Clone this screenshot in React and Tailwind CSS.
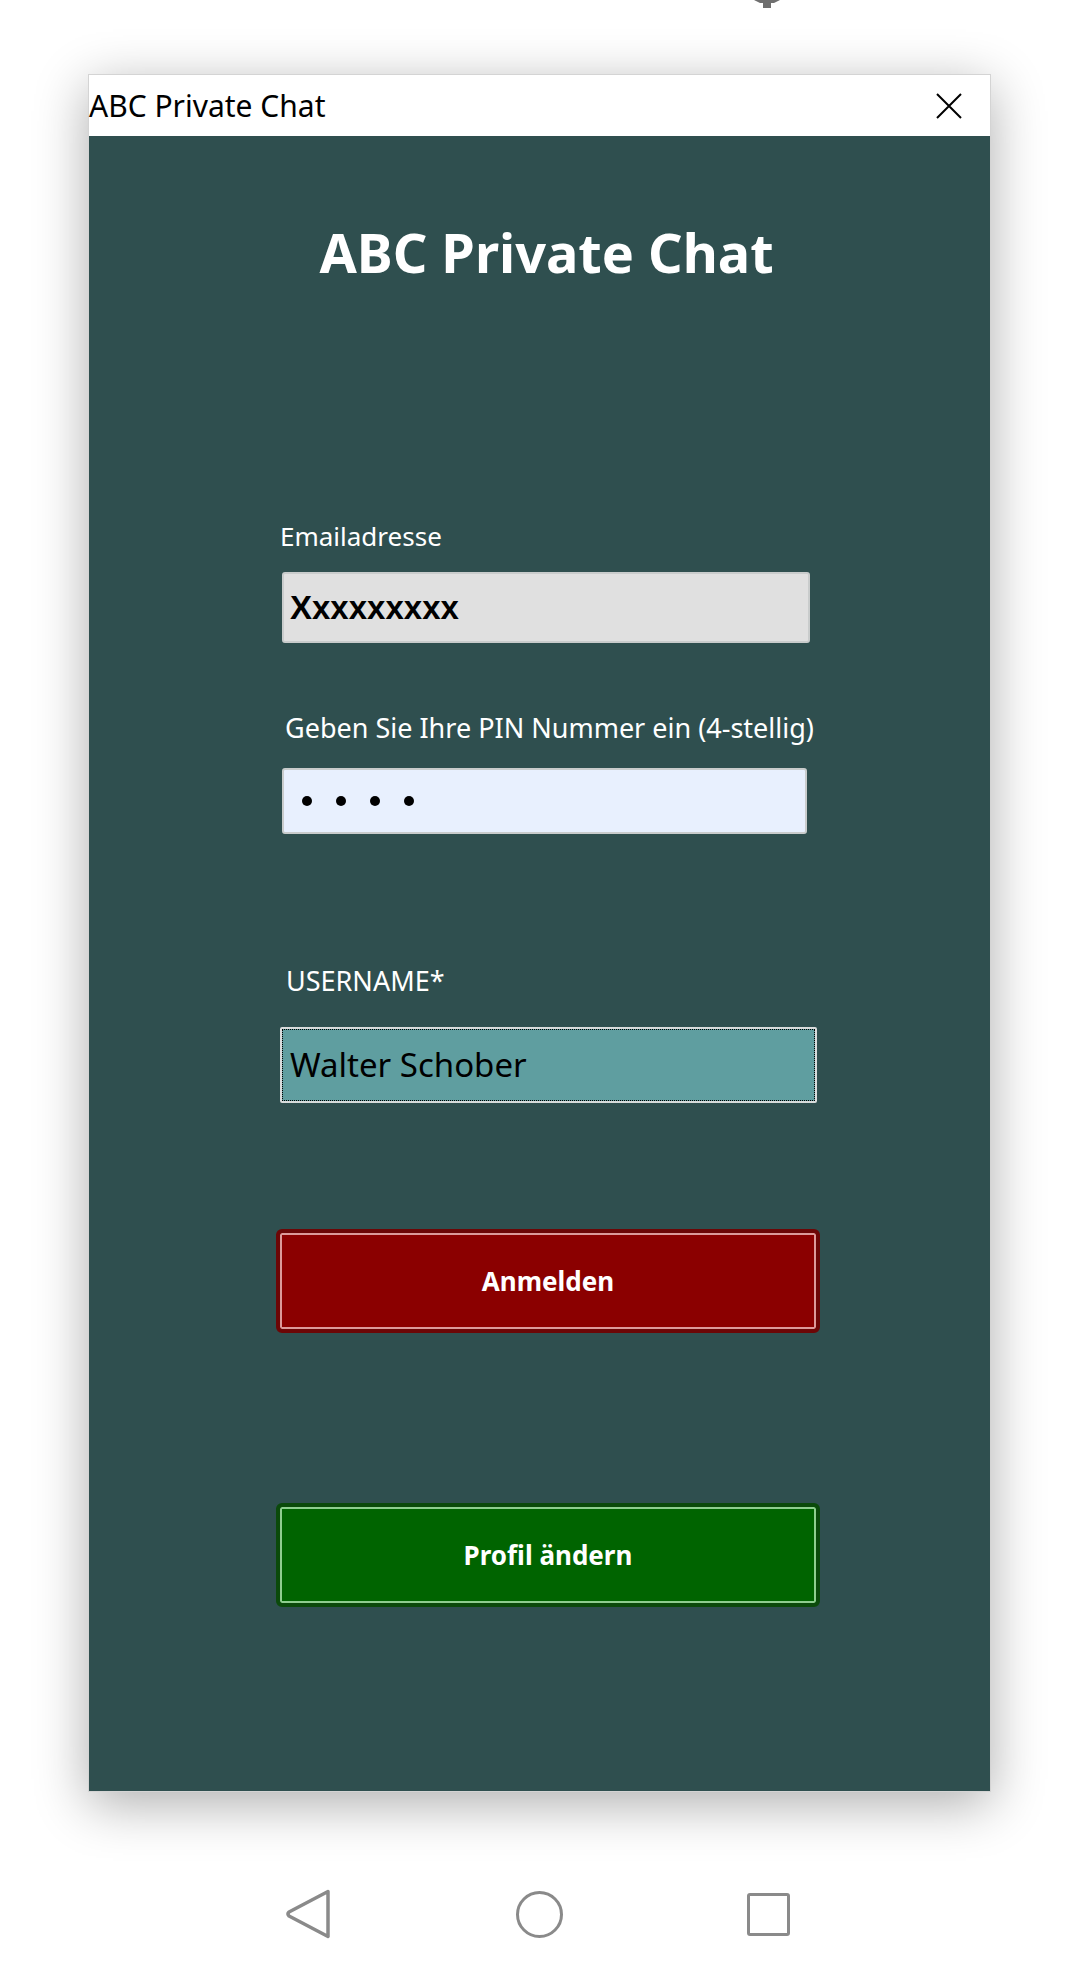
const SANS = { fontFamily: '"Noto Sans", "Open Sans", sans-serif' };

function Label({ children, className }) {
  return (
    <div className={`leading-[30px] text-white ${className}`} style={SANS}>
      {children}
    </div>
  );
}

function NavBar() {
  return (
    <div className="flex items-center h-[48px] mt-[98px]">
      {/* back */}
      <svg className="ml-[285px]" width="46" height="50" viewBox="0 0 46 50" fill="none">
        <path
          d="M43 2.5 L4 23 Q2 25 4 27 L43 47.5 Z"
          stroke="#8a8a8a"
          strokeWidth="3.5"
          strokeLinejoin="round"
        />
      </svg>
      {/* home */}
      <div className="ml-[185px] w-[47px] h-[47px] rounded-full border-[3.5px] border-[#8a8a8a]" />
      {/* recents */}
      <div className="ml-[184px] w-[43px] h-[43px] rounded-[3px] border-[3.5px] border-[#8a8a8a]" />
    </div>
  );
}

export default function App() {
  return (
    <div className="w-[1080px] h-[1974px] bg-white overflow-hidden flex flex-col">
      {/* ── status bar remnant ─────────────────────────────────────────────── */}
      <div className="h-[74px] flex items-start">
        <svg className="ml-[752px]" width="30" height="8" viewBox="0 0 30 8">
          <path d="M2 0 H28 L22 3 H19 V8 H11 V3 H8 Z" fill="#6f6f6f" />
        </svg>
      </div>

      {/* ── dialog window ──────────────────────────────────────────────────── */}
      <div className="ml-[88px] w-[903px] h-[1718px] flex flex-col border border-[#d4d4d4] shadow-[0_12px_50px_rgba(0,0,0,0.32)]">
        <div className="h-[61px] bg-white flex items-center justify-between">
          <span className="text-[30px] leading-[36px] text-black" style={SANS}>
            ABC Private Chat
          </span>
          <svg className="mr-[28px]" width="26" height="26" viewBox="0 0 26 26">
            <path d="M1 1 L25 25 M25 1 L1 25" stroke="#000" strokeWidth="2" />
          </svg>
        </div>

        <div className="flex-1 bg-[#2f4f4f] flex flex-col">
          <h1
            className="pt-[84px] pl-[14px] text-center text-[54px] leading-[64px] font-bold text-white"
            style={SANS}
          >
            ABC Private Chat
          </h1>

          <div className="flex flex-col items-start pl-[187px]">
            <Label className="mt-[237px] ml-[4px] text-[26px]">Emailadresse</Label>
            <div className="mt-[21px] ml-[6px] w-[528px] h-[71px] bg-[#e0e0e0] border-2 border-[#c9cccc] rounded-[3px] flex items-center pl-[6px]">
              <span
                className="text-[33px] font-bold text-black"
                style={{ fontFamily: '"Liberation Sans", Arial, sans-serif' }}
              >
                Xxxxxxxxx
              </span>
            </div>

            <Label className="mt-[70px] ml-[9px] text-[27px]">
              Geben Sie Ihre PIN Nummer ein (4-stellig)
            </Label>
            <div className="mt-[25px] ml-[6px] w-[525px] h-[66px] bg-[#e8f0fe] border-2 border-[#c9cccc] rounded-[3px] flex items-center gap-[24px] pl-[18px]">
              <span className="w-[10px] h-[10px] rounded-full bg-black" />
              <span className="w-[10px] h-[10px] rounded-full bg-black" />
              <span className="w-[10px] h-[10px] rounded-full bg-black" />
              <span className="w-[10px] h-[10px] rounded-full bg-black" />
            </div>

            <Label className="mt-[132px] ml-[10px] text-[27px]">USERNAME*</Label>
            <div className="mt-[31px] ml-[4px] w-[537px] h-[76px] border-2 border-[#d9dcdc] rounded-[2px]">
              <div className="w-full h-full bg-[#5f9ea0] border border-dotted border-black flex items-center pl-[7px]">
                <span className="text-[33px] text-black" style={SANS}>
                  Walter Schober
                </span>
              </div>
            </div>

            <button
              className="mt-[126px] w-[544px] h-[104px] rounded-[6px] bg-[#8b0000] border-[4px] border-[#6c0606] shadow-[inset_0_0_0_2px_#dc9a9a] text-white text-[26px] font-bold"
              style={SANS}
            >
              Anmelden
            </button>

            <button
              className="mt-[170px] w-[544px] h-[104px] rounded-[6px] bg-[#006400] border-[4px] border-[#0b4a0b] shadow-[inset_0_0_0_2px_#8fce8f] text-white text-[26px] font-bold"
              style={SANS}
            >
              Profil ändern
            </button>
          </div>
        </div>
      </div>

      <NavBar />
    </div>
  );
}
